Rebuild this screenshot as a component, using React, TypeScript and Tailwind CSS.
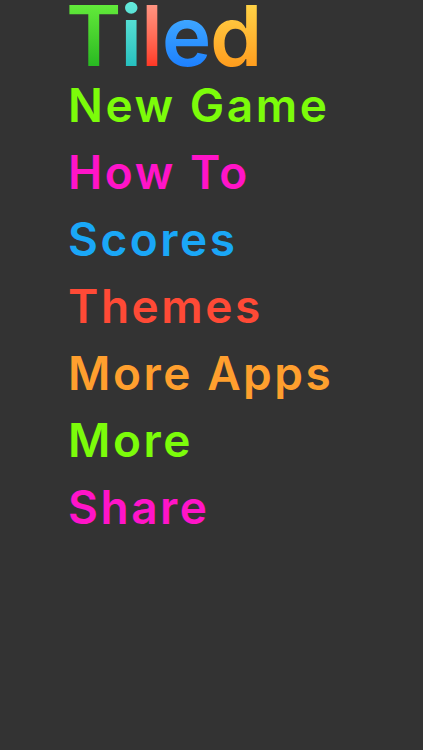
const menu = [
  { label: 'New Game', color: 'text-[#7cfc0a]' },
  { label: 'How To', color: 'text-[#ff14c8]' },
  { label: 'Scores', color: 'text-[#1aa7f7]' },
  { label: 'Themes', color: 'text-[#ff4a36]' },
  { label: 'More Apps', color: 'text-[#ff9f2e]' },
  { label: 'More', color: 'text-[#7cfc0a]' },
  { label: 'Share', color: 'text-[#ff14c8]' },
];

export default function App() {
  return (
    <div className="min-h-[750px] w-full bg-[#333333] font-['Inter','Lato',sans-serif]">
      <div className="flex flex-col pl-[66px]">
        <h1 className="flex text-[84px] leading-[72px] font-semibold tracking-[-0.015em]">
          <span className="bg-gradient-to-b from-[#66ee3c] to-[#1fb51f] bg-clip-text text-transparent">T</span>
          <span className="bg-gradient-to-b from-[#66ecdc] to-[#1cbcbc] bg-clip-text text-transparent">i</span>
          <span className="bg-gradient-to-b from-[#ff9a88] to-[#ff2614] bg-clip-text text-transparent">l</span>
          <span className="bg-gradient-to-b from-[#4cb4ff] to-[#1a7cff] bg-clip-text text-transparent">e</span>
          <span className="bg-gradient-to-b from-[#ffd648] to-[#ff9818] bg-clip-text text-transparent">d</span>
        </h1>
        <nav className="flex flex-col pl-[2px]">
          {menu.map((item) => (
            <button
              key={item.label}
              type="button"
              className={`whitespace-nowrap text-left text-[46px] leading-[67px] font-semibold tracking-[0.055em] ${item.color}`}
            >
              {item.label}
            </button>
          ))}
        </nav>
      </div>
    </div>
  );
}
